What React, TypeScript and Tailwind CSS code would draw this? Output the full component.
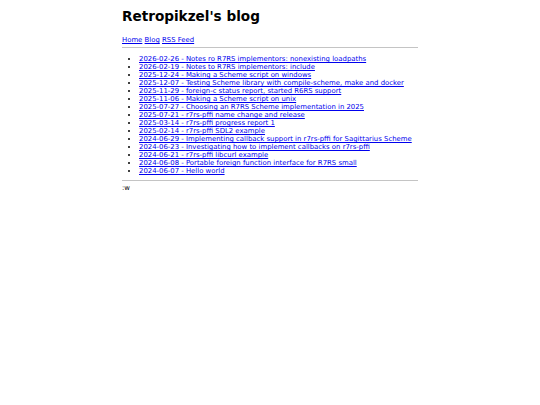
const posts = [
  ['2026-02-26', 'Notes ro R7RS implementors: nonexisting loadpaths'],
  ['2026-02-19', 'Notes to R7RS implementors: include'],
  ['2025-12-24', 'Making a Scheme script on windows'],
  ['2025-12-07', 'Testing Scheme library with compile-scheme, make and docker'],
  ['2025-11-29', 'foreign-c status report, started R6RS support'],
  ['2025-11-06', 'Making a Scheme script on unix'],
  ['2025-07-27', 'Choosing an R7RS Scheme implementation in 2025'],
  ['2025-07-21', 'r7rs-pffi name change and release'],
  ['2025-03-14', 'r7rs-pffi progress report 1'],
  ['2025-02-14', 'r7rs-pffi SDL2 example'],
  ['2024-06-29', 'Implementing callback support in r7rs-pffi for Sagittarius Scheme'],
  ['2024-06-23', 'Investigating how to implement callbacks on r7rs-pffi'],
  ['2024-06-21', 'r7rs-pffi libcurl example'],
  ['2024-06-08', 'Portable foreign function interface for R7RS small'],
  ['2024-06-07', 'Hello world'],
];

export default function App() {
  return (
    <div className="min-h-[405px] bg-white font-['DejaVu_Sans',sans-serif] text-[6.9px] leading-[8px] text-black">
      <div className="mx-auto w-[296px] pt-[9px]">
        <h1 className="mb-[11.5px] text-[13.6px] leading-[15.8px] font-bold">Retropikzel's blog</h1>
        <nav className="mb-[2.5px]">
          <a href="#" className="text-[#0000ee] underline">Home</a>{' '}
          <a href="#" className="text-[#0000ee] underline">Blog</a>{' '}
          <a href="#" className="text-[#0000ee] underline">RSS Feed</a>
        </nav>
        <hr className="border-t border-[#c4c4c4]" />
        <ul className="mt-[7.5px] mb-[4.5px] list-disc pl-[17px]">
          {posts.map(([date, title]) => (
            <li key={date + title}>
              <a href="#" className="text-[#0000ee] underline">
                {date} - {title}
              </a>
            </li>
          ))}
        </ul>
        <hr className="border-t border-[#c4c4c4]" />
        <p className="mt-[3px]">:w</p>
      </div>
    </div>
  );
}
